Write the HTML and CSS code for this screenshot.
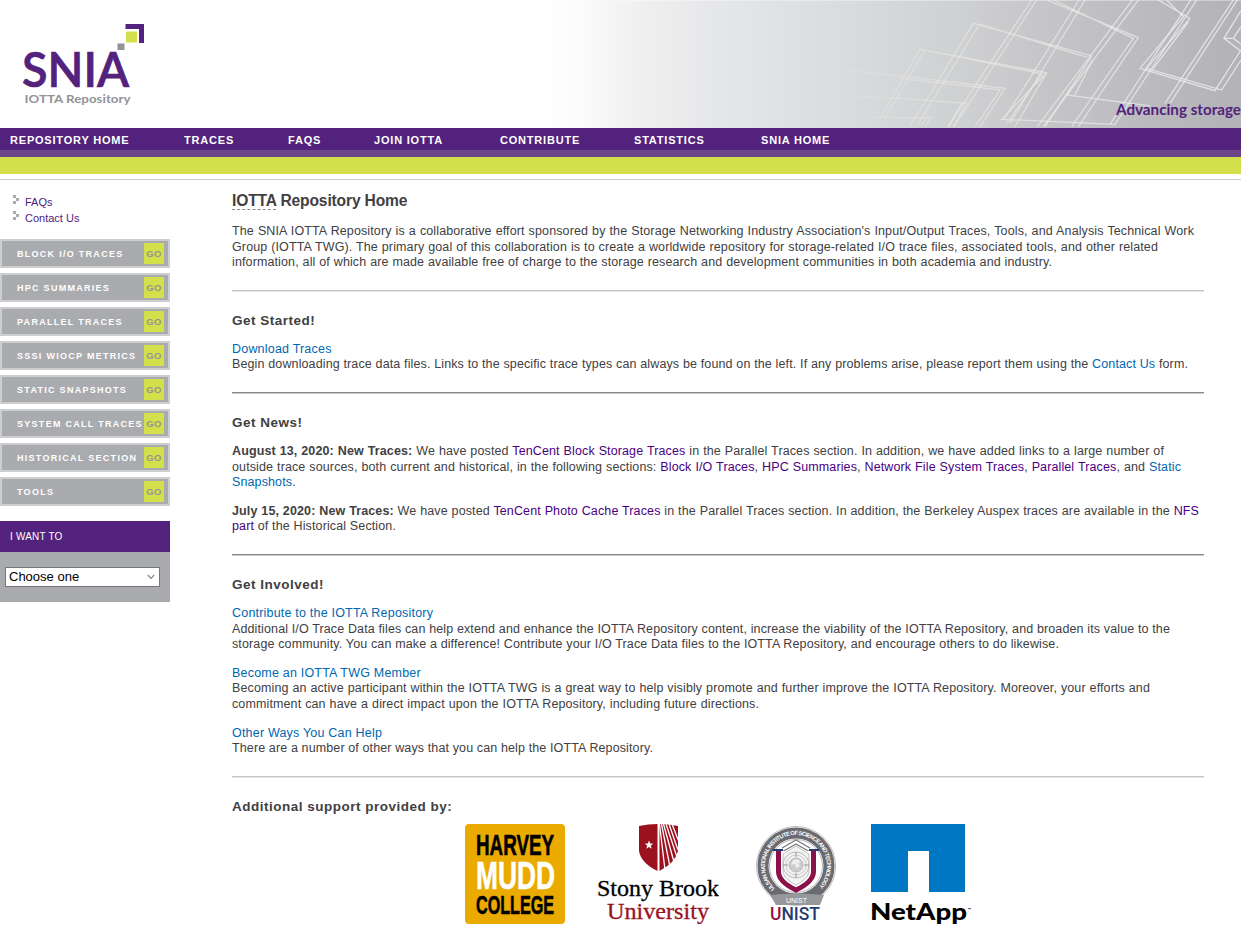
FILE: index.html
```html
<!DOCTYPE html>
<html lang="en">
<head>
<meta charset="utf-8">
<title>IOTTA Repository Home</title>
<link rel="stylesheet" href="styles.css">
</head>
<body>
<header class="banner">
<svg width="1241" height="128" viewBox="0 0 1241 128">
  <defs>
    <linearGradient id="fade" x1="540" x2="1241" y1="0" y2="0" gradientUnits="userSpaceOnUse">
      <stop offset="0" stop-color="#fff"/><stop offset=".05" stop-color="#fcfcfc"/><stop offset=".15" stop-color="#efefef"/><stop offset=".25" stop-color="#e6e7e9"/><stop offset=".42" stop-color="#dbdcdd"/><stop offset=".6" stop-color="#cfd0d1"/><stop offset=".75" stop-color="#c3c3c6"/><stop offset="1" stop-color="#b2b2b7"/>
    </linearGradient>
    <linearGradient id="wire" x1="-300" x2="1023" y1="0" y2="0" gradientUnits="userSpaceOnUse">
      <stop offset="0" stop-color="#eee" stop-opacity="0"/><stop offset=".4" stop-color="#eee" stop-opacity=".55"/><stop offset="1" stop-color="#f2f2f2" stop-opacity=".8"/>
    </linearGradient>
  </defs>
  <rect x="540" width="701" height="128" fill="url(#fade)"/>
  <g transform="translate(900 0) scale(.3333)" fill="none" stroke="url(#wire)" stroke-width="3.8">
    <path d="M440 0L715 113L535 380M460 0L700 115L515 380M30 380L220 70L575 168L500 285L750 318M50 380L238 72L562 172M575 168L435 380M578 180L525 284"/>
    <path d="M-60 355L60 148L440 218L345 380M-45 355L74 150L426 222L320 370M440 218L305 358L645 373L890 0M630 373L872 0"/>
    <path d="M410 0L162 380M395 0L145 380M555 0L330 370M537 0L312 358M715 0L430 380M697 0L412 380M1012 0L810 310M1000 0L795 310"/>
    <path d="M775 0L870 55L740 205L965 270L1023 180M800 0L850 50L720 205L945 272L1023 150M865 66L758 208M1023 32L972 115L1023 154M1023 80L1000 115L1023 132M972 115H1000"/>
    <path d="M-170 210L0 228L315 265L240 380M0 235L300 270L225 380M-180 287L0 295L200 310L160 380M185 310L145 380M-80 352L93 353L75 380M78 355L62 380M-150 210L-230 380M-300 340L-320 380"/>
  </g>
  <path d="M600 .5H1241" stroke="#fff" stroke-opacity=".35"/>
  <text class="tagline" x="1116" y="115" textLength="125" lengthAdjust="spacingAndGlyphs">Advancing storage</text>
  <text class="brand" x="22" y="87" textLength="107" lengthAdjust="spacingAndGlyphs">SNIA</text>
  <text class="brand-sub" x="24.500" y="103" textLength="106" lengthAdjust="spacingAndGlyphs">IOTTA Repository</text>
  <path d="M125.500 24H144V43H139V29H125.500Z" fill="#52227c"/>
  <path d="M126 31.500H137V42.500H126Z" fill="#d4e04b"/>
  <path d="M117.500 43.500H124.500V50H117.500Z" fill="#929396"/>
</svg>
</header>
<nav class="nav"><a>REPOSITORY HOME</a><a>TRACES</a><a>FAQS</a><a>JOIN IOTTA</a><a>CONTRIBUTE</a><a>STATISTICS</a><a>SNIA HOME</a></nav>
<div class="lime"></div>
<div class="page">
<aside class="side">
  <ul class="quick">
    <li><svg width="7" height="10" viewBox="0 0 7 10"><path d="M0 0H3V3H0ZM3 3H6V6H3ZM0 6H3V9H0Z"/></svg><a>FAQs</a></li>
    <li><svg width="7" height="10" viewBox="0 0 7 10"><path d="M0 0H3V3H0ZM3 3H6V6H3ZM0 6H3V9H0Z"/></svg><a>Contact Us</a></li>
  </ul>
  <div class="menu">
    <a class="btn"><span>BLOCK I/O TRACES</span><b>GO</b></a>
    <a class="btn"><span>HPC SUMMARIES</span><b>GO</b></a>
    <a class="btn"><span>PARALLEL TRACES</span><b>GO</b></a>
    <a class="btn"><span>SSSI WIOCP METRICS</span><b>GO</b></a>
    <a class="btn"><span>STATIC SNAPSHOTS</span><b>GO</b></a>
    <a class="btn"><span>SYSTEM CALL TRACES</span><b>GO</b></a>
    <a class="btn"><span>HISTORICAL SECTION</span><b>GO</b></a>
    <a class="btn"><span>TOOLS</span><b>GO</b></a>
  </div>
  <div class="want">I WANT TO</div>
  <div class="want-body"><div class="select"><span>Choose one</span><svg width="8" height="6" viewBox="0 0 8 6"><path d="M.8 1L4 4.300L7.200 1" fill="none" stroke="#888" stroke-width="1.200"/></svg></div></div>
</aside>
<main class="content">
  <h1><abbr>IOTTA</abbr> Repository Home</h1>
  <p><span class="line" style="width:962px">The SNIA IOTTA Repository is a collaborative effort sponsored by the Storage Networking Industry Association's Input/Output Traces, Tools, and Analysis Technical Work</span>
    <span class="line" style="width:926px">Group (IOTTA TWG). The primary goal of this collaboration is to create a worldwide repository for storage-related I/O trace files, associated tools, and other related</span>
    <span class="line" style="width:820px">information, all of which are made available free of charge to the storage research and development communities in both academia and industry.</span></p>
  <hr class="light">
  <h2>Get Started!</h2>
  <p><a class="title">Download Traces</a>
    <span class="line" style="width:956px">Begin downloading trace data files. Links to the specific trace types can always be found on the left. If any problems arise, please report them using the <a>Contact Us</a> form.</span></p>
  <hr>
  <h2>Get News!</h2>
  <p><span class="line" style="width:932px"><strong>August 13, 2020: New Traces:</strong> We have posted <a class="seen">TenCent Block Storage Traces</a> in the Parallel Traces section. In addition, we have added links to a large number of</span>
    <span class="line" style="width:949px">outside trace sources, both current and historical, in the following sections: <a class="seen">Block I/O Traces</a>, <a class="seen">HPC Summaries</a>, <a class="seen">Network File System Traces</a>, <a class="seen">Parallel Traces</a>, and <a>Static</a></span>
    <span class="line" style="width:64px"><a>Snapshots</a>.</span></p>
  <p><span class="line" style="width:967px"><strong>July 15, 2020: New Traces:</strong> We have posted <a class="seen">TenCent Photo Cache Traces</a> in the Parallel Traces section. In addition, the Berkeley Auspex traces are available in the <a class="seen">NFS</a></span>
    <span class="line" style="width:164px"><a class="seen">part</a> of the Historical Section.</span></p>
  <hr>
  <h2>Get Involved!</h2>
  <p><a class="title">Contribute to the IOTTA Repository</a>
    <span class="line" style="width:938px">Additional I/O Trace Data files can help extend and enhance the IOTTA Repository content, increase the viability of the IOTTA Repository, and broaden its value to the</span>
    <span class="line" style="width:827px">storage community. You can make a difference! Contribute your I/O Trace Data files to the IOTTA Repository, and encourage others to do likewise.</span></p>
  <p><a class="title">Become an IOTTA TWG Member</a>
    <span class="line" style="width:918px">Becoming an active participant within the IOTTA TWG is a great way to help visibly promote and further improve the IOTTA Repository. Moreover, your efforts and</span>
    <span class="line" style="width:527px">commitment can have a direct impact upon the IOTTA Repository, including future directions.</span></p>
  <p><a class="title">Other Ways You Can Help</a>
    <span class="line" style="width:421px">There are a number of other ways that you can help the IOTTA Repository.</span></p>
  <hr class="light">
  <h2>Additional support provided by:</h2>
  <div class="logos">
    <svg class="mudd" width="100" height="100" viewBox="0 0 100 100">
      <rect width="100" height="100" rx="4" fill="#eaaa00"/>
      <text x="11" y="31" font-size="30" textLength="78" lengthAdjust="spacingAndGlyphs" stroke="#000">HARVEY</text>
      <text x="11" y="65" font-size="39" fill="#fff" stroke="#fff" textLength="79" lengthAdjust="spacingAndGlyphs">MUDD</text>
      <text x="11" y="90" font-size="26" textLength="78" lengthAdjust="spacingAndGlyphs" stroke="#000">COLLEGE</text>
    </svg>
    <svg class="stony" width="122" height="100" viewBox="0 0 122 100">
      <path d="M42 2Q51 0 60.500 0V47Q44 39 42 27Z" fill="#9b111e"/>
      <path d="M62.500 0Q72 0 81 2V27Q79 38 62.500 47Z" fill="#9b111e"/>
      <path d="M62.500 0L68 46M64.500 0L73 43M66.500 0L77 38M69 0L80 33M72 0L81 26M75 0L82 18" stroke="#fff" stroke-width="1.300" fill="none"/>
      <path d="M52 16.500L53.100 19.600L56.300 19.700L53.800 21.600L54.700 24.700L52 22.900L49.300 24.700L50.200 21.600L47.700 19.700L50.900 19.600Z" fill="#fff"/>
      <text x="0" y="72" font-size="23" stroke="#000" textLength="122" lengthAdjust="spacingAndGlyphs">Stony Brook</text>
      <text x="10" y="95" font-size="23" fill="#9b111e" stroke="#9b111e" textLength="102" lengthAdjust="spacingAndGlyphs">University</text>
    </svg>
    <svg class="unist" width="82" height="100" viewBox="0 0 82 100">
      <defs><path id="ring" d="M19.800 64.500A31 31 0 1 1 62.200 64.500"/></defs>
      <circle cx="41" cy="42" r="39.500" fill="#fff" stroke="#bbb"/>
      <circle cx="41" cy="42" r="33" fill="none" stroke="#696b70" stroke-width="11"/>
      <circle cx="41" cy="42" r="26.500" fill="#fff" stroke="#999" stroke-width=".7"/>
      <text class="ring-text" font-size="5.800"><textPath href="#ring" textLength="145" lengthAdjust="spacing">ULSAN NATIONAL INSTITUTE OF SCIENCE AND TECHNOLOGY</textPath></text>
      <path d="M27 24L41 16L55 24M27 28L41 20L55 28" fill="none" stroke="#77797d" stroke-width="1.300"/>
      <path d="M23.500 27V48Q24 58 41 66Q58 58 58.500 48V27" fill="#fff" stroke="#8b1149" stroke-width="5"/>
      <path d="M18 26H28M54 26H64" stroke="#253b70" stroke-width="2"/>
      <path d="M28 30L41 22L54 30V49Q51 56 41 61Q31 56 28 49Z" fill="#f3f3f3" stroke="#aaa" stroke-width=".7"/>
      <circle cx="41" cy="41" r="13" fill="none" stroke="#bbb"/><circle cx="41" cy="41" r="10" fill="none" stroke="#ccc"/><circle cx="41" cy="41" r="7" fill="#ccc" stroke="#aaa" stroke-width=".7"/><path d="M38 36Q43 34 46 38L43 39L45 42L41 44L40 40L36 41Z" fill="#eee"/><path d="M28 41H33M49 41H54M41 28V33M41 49V54" stroke="#999"/>
      <path d="M15 71Q41 68 69 71L65 81H21Z" fill="#96989b"/>
      <text x="31" y="78.500" font-size="6.500" fill="#fff" textLength="21" lengthAdjust="spacingAndGlyphs">UNIST</text>
      <text class="unist-name" x="15" y="96" font-size="18.500" textLength="50" lengthAdjust="spacingAndGlyphs"><tspan fill="#8b1149">U</tspan><tspan>NIST</tspan></text>
    </svg>
    <svg class="netapp" width="101" height="100" viewBox="0 0 101 100">
      <path d="M0 0H94V68H58V27H37V68H0Z" fill="#0077c2"/>
      <text x="-1" y="96" font-size="23" textLength="97" lengthAdjust="spacingAndGlyphs">NetApp</text>
      <text x="97" y="87" font-size="4">™</text>
    </svg>
  </div>
</main>
</div>
</body>
</html>
```
FILE: styles.css
```css
* { box-sizing: border-box; }
body { margin: 0; height: 931px; overflow: hidden; background: #fff; color: #414042; font: 13px/15.6px "Liberation Sans", Arial, sans-serif; }
svg { display: block; }
.banner { height: 128px; }
.tagline { font: bold 16px Lato, sans-serif; fill: #52227c; }
.brand { font: 600 47.5px Lato, sans-serif; fill: #52227c; stroke: #52227c; stroke-width: .7px; }
.brand-sub { font: bold 11.5px Lato, sans-serif; fill: #929396; }
.nav { display: grid; grid-template-columns: 174px 104px 86px 126px 134px 127px auto; height: 29px; padding: 5px 10px 0; background: #52227c; border-bottom: 7px solid #6b478a; color: #fff; font-size: 11px; line-height: 14px; font-weight: bold; letter-spacing: .8px; white-space: nowrap; }
.lime { height: 17px; background: #d4e04b; }
.page { display: flex; margin-top: 5px; border-top: 1px solid #ccc; }
.side { width: 170px; flex: none; padding-top: 14px; }
.quick { list-style: none; margin: 0; padding: 0 0 0 13px; color: #52227c; font-size: 11px; }
.quick li { display: flex; gap: 5px; height: 16px; line-height: 16px; }
.quick svg { margin-top: 1px; fill: #aaa; }
.menu { display: flex; flex-direction: column; gap: 5px; margin-top: 13px; }
.btn { display: flex; align-items: center; height: 29px; border: 2px solid #cdced0; background: #a9abae; padding: 0 4px 0 15px; white-space: nowrap; }
.btn span { flex: none; width: 127px; color: #fff; font: bold 9px/12px "Liberation Sans", Arial, sans-serif; letter-spacing: 1.28px; }
.btn b { flex: none; width: 20px; height: 21px; background: #d4e04b; color: #929497; font-size: 9.5px; line-height: 22px; letter-spacing: .4px; text-align: center; }
.want { height: 31px; margin-top: 15px; padding-left: 10px; background: #52227c; color: #fff; font-size: 10px; line-height: 31px; letter-spacing: .2px; }
.want-body { height: 50px; padding: 15px 10px 0 5px; background: #a9abae; }
.select { display: flex; align-items: center; justify-content: space-between; height: 20px; padding: 0 4px 0 3px; border: 1px solid #767676; background: #fff; color: #000; }
.content { width: 972px; margin-left: 62px; }
h1 { margin: 11px 0 14px; font-size: 15.6px; line-height: 19px; letter-spacing: -.15px; }
abbr { border-bottom: 1px dashed #888; }
h2 { margin: 21px 0 13px; font-size: 13.5px; line-height: 16px; letter-spacing: .5px; }
p { margin: 0 0 13px; font-size: 12.5px; letter-spacing: .12px; }
.line { display: block; text-align-last: justify; }
a { color: #0067b1; }
.title { display: block; letter-spacing: .2px; }
.nav a, .quick a { color: inherit; }
.seen { color: #4b0082; }
hr { height: 2px; margin: 19px 0 0; border: 0; border-top: 1px solid #888; border-bottom: 1px solid #ccc; }
.light { border-top-color: #c4c4c4; border-bottom-color: #e4e4e4; }
.logos { display: flex; margin: -4px 0 0 233px; }
.mudd { font-family: "Liberation Sans Narrow", "Liberation Sans", sans-serif; font-weight: bold; stroke-width: .6px; }
.stony { margin-left: 32px; font-family: "Liberation Serif", serif; stroke-width: .3px; }
.unist { margin-left: 36px; font-family: "Liberation Sans", sans-serif; }
.ring-text { fill: #fff; font-weight: bold; }
.unist-name { fill: #253b70; font-family: Roboto, sans-serif; font-weight: 500; }
.netapp { margin-left: 34px; font-family: Lato, sans-serif; font-weight: 900; overflow: visible; }
```
